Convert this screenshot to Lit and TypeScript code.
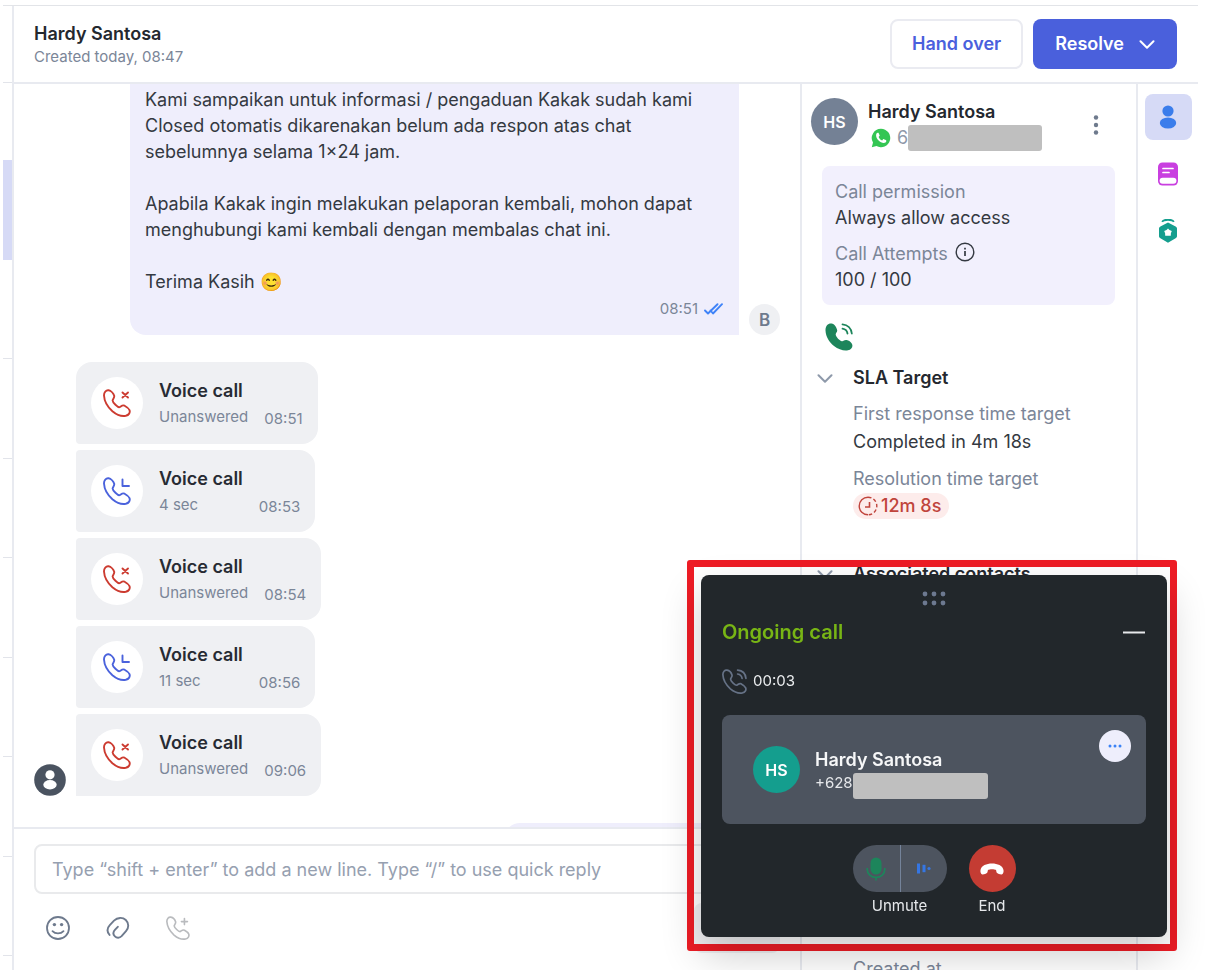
import { LitElement, html, css, svg } from "lit";
import { customElement, property } from "lit/decorators.js";
import { classMap } from "lit/directives/class-map.js";

const HANDSET =
  "M5.6 1.3C3 .9.9 3.4 1 6.5 1.3 12 4.4 17.8 9.4 22.2c4.400 3.700 9.500 5.300 13.400 4.600C25.900 26.100 27.400 23.600 26.500 21.100 25.700 19 23.500 17.800 21.400 16.600 19.400 15.600 18 17.500 16.500 18.200 15 18.600 9.500 13.500 9.600 11.500 9.800 10 11.700 8.600 11.200 6.800 10.500 4.500 8 1.700 5.600 1.300Z";

const handset = (extra: unknown) => html`
  <svg class="icon" viewBox="0 0 28 28" fill="none" stroke="currentColor" stroke-width="1.900"
    stroke-linejoin="round" stroke-linecap="round" aria-hidden="true">
    <path d=${HANDSET}></path>${extra}
  </svg>`;

const chevron = html`
  <svg class="chevron" viewBox="0 0 16 9" fill="none" stroke="currentColor" stroke-width="2"
    stroke-linecap="round" stroke-linejoin="round" aria-hidden="true"><path d="M1.500 1.200 8 7.700l6.500-6.500"></path></svg>`;

const base = css`
  * { box-sizing: border-box; }
  button { font: inherit; border: 0; margin: 0; padding: 0; background: none; color: inherit; cursor: pointer; }
  p, h1, h2, h3, dl, dd, ul { margin: 0; padding: 0; }
  svg { display: block; flex: none; }
`;

@customElement("voice-call-card")
export class VoiceCallCard extends LitElement {
  @property() detail = "";
  @property() time = "";
  @property({ type: Boolean }) missed = false;
  @property() place = "middle";

  static styles = [base, css`
    :host { display: block; width: fit-content; }
    .card { display: flex; align-items: center; gap: 16px; height: 82px; padding: 0 15px; background: #eff0f3; border-radius: 4px 16px 16px 4px; }
    .card.first { border-top-left-radius: 16px; }
    .card.last { border-bottom-left-radius: 0; }
    .disc { display: grid; place-items: center; width: 52px; height: 52px; border-radius: 50%; background: #fff; color: #4a62dc; flex: none; }
    .missed .disc { color: #cc3b30; }
    .icon { width: 28px; height: 28px; }
    .body { display: grid; grid-template-columns: auto auto; column-gap: 16px; padding-top: 1px; font-size: 15px; line-height: 26px; color: #7b8698; }
    .title { font-size: 18px; font-weight: 600; color: #272b33; }
    .time { grid-column: 2; padding-top: 4px; line-height: 22px; }
    .detail { grid-column: 1; }
  `];

  render() {
    const mark = this.missed
      ? svg`<path d="M19.500 3.500l5.500 5M25 3.500l-5.500 5"></path>`
      : svg`<path d="M19.500 2.500v6.500h6.500"></path>`;
    return html`
      <article class=${classMap({ card: true, missed: this.missed, [this.place]: true })}>
        <span class="disc">${handset(mark)}</span>
        <div class="body">
          <h3 class="title">Voice call</h3>
          <p class="detail">${this.detail}</p>
          <time class="time">${this.time}</time>
        </div>
      </article>`;
  }
}

@customElement("contact-panel")
export class ContactPanel extends LitElement {
  static styles = [base, css`
    :host { display: block; overflow: hidden; padding: 14px 10px 0 9px; font-size: 18px; line-height: 26px; color: #343941; }
    .who { display: flex; align-items: flex-start; gap: 10px; }
    .avatar { display: grid; place-items: center; width: 47px; height: 47px; border-radius: 50%; background: #748195; color: #fff; font-weight: 600; font-size: 16px; flex: none; }
    .names { flex: 1; min-width: 0; padding-top: 1px; }
    .name { font-size: 18px; font-weight: 600; color: #24282f; line-height: 26px; }
    .number { display: flex; align-items: center; color: #8f99a9; height: 26px; }
    .wa { width: 20px; height: 20px; margin: 0 6px 0 3px; }
    .hidden { width: 134px; height: 26px; border-radius: 3px; background: #bfbfbf; }
    .more { display: grid; place-items: center; align-self: center; width: 20px; height: 32px; margin-right: 20px; color: #6e7a8d; }
    .more svg { width: 6px; height: 20px; }
    .permission { margin: 15px 11px 0 11px; padding: 13px 13px 12px; border-radius: 8px; background: #f2f0fd; }
    .label { display: flex; align-items: center; gap: 7px; color: #7b8698; }
    .permission .label + dd + .label { margin-top: 10px; }
    .info { width: 20px; height: 20px; color: #343941; margin-top: -4px; }
    .ring { display: grid; place-items: center; width: 28px; height: 28px; margin: 18px 0 0 14px; color: #1d855b; }
    .ring svg { width: 28px; height: 28px; }
    .head { display: flex; align-items: center; gap: 20px; margin: 14px 0 0 6px; font-weight: 600; font-size: 18px; color: #24282f; }
    .chevron { width: 16px; height: 9px; color: #8e99aa; }
    .facts { margin-left: 42px; padding-top: 9px; line-height: 28px; }
    .facts .label + dd + .label { margin-top: 9px; }
    .late { display: inline-flex; align-items: center; gap: 3px; height: 26px; padding: 0 8px 0 5px; border-radius: 13px; background: #fdeceb; color: #c0443c; font-weight: 500; }
    .late svg { width: 20px; height: 20px; }
    .sla { min-height: 182px; }
    .contacts { min-height: 395px; }
    .created { margin-left: 42px; color: #7b8698; }
  `];

  render() {
    return html`
      <div class="who">
        <span class="avatar">HS</span>
        <div class="names">
          <h2 class="name">Hardy Santosa</h2>
          <div class="number">
            <svg class="wa" viewBox="0 0 20 20" aria-label="WhatsApp">
              <path fill="#34c653" d="M10 .8a9.200 9.200 0 0 0-8 13.800L.8 19.200l4.700-1.200A9.200 9.200 0 1 0 10 .8Z"></path>
              <path fill="#fff" d="M6.700 4.800c-.900.2-1.700 1.200-1.600 2.600.2 3.700 4 7.400 7.700 7.600 1.300 0 2.300-.8 2.500-1.700.1-.6 0-.9-.5-1.200l-1.900-.9c-.4-.2-.7-.1-1 .3l-.7.900c-1.500-.5-3-2-3.600-3.500l.8-.8c.3-.3.3-.6.2-.9l-.9-2c-.2-.4-.5-.5-1-.4Z"></path>
            </svg>
            6<span class="hidden"></span>
          </div>
        </div>
        <button class="more" aria-label="More options">
          <svg viewBox="0 0 6 20" fill="currentColor"><circle cx="3" cy="2.500" r="2.200"></circle><circle cx="3" cy="10" r="2.200"></circle><circle cx="3" cy="17.500" r="2.200"></circle></svg>
        </button>
      </div>
      <dl class="permission">
        <dt class="label">Call permission</dt>
        <dd>Always allow access</dd>
        <dt class="label">Call Attempts
          <svg class="info" viewBox="0 0 20 20" fill="none" stroke="currentColor"><circle cx="10" cy="10" r="8.800" stroke-width="1.400"></circle><path d="M10 9v5" stroke-width="1.700"></path><path d="M10 5.800v1.800" stroke-width="1.700"></path></svg>
        </dt>
        <dd>100 / 100</dd>
      </dl>
      <button class="ring" aria-label="Call contact">
        <svg viewBox="0 0 28 28" fill="none">
          <path fill="currentColor" d="M6.600.6C3 .2.400 3 .500 7.500.800 13.500 4 19 9 23c4.500 3.600 10 5 14 4.200 3.800-.8 5.300-4 3.900-6.500-.9-1.700-3.200-3.200-5.400-3.600-2.200-.3-2.900 1.300-4.600 1.100-2.200-.4-6-4.400-6.200-6.500-.1-1.600 1.700-2.300 1.500-4.400C11.800 4.800 9.400.9 6.600.6Z"></path>
          <g stroke="currentColor" stroke-width="1.800" stroke-linecap="round"><path d="M17.500 1.300c5.200.4 8.800 4 9.300 9.200"></path><path d="M17.500 5.600c2.800.5 4.600 2.200 5 4.900"></path></g>
        </svg>
      </button>
      <section class="sla">
        <h3 class="head">${chevron}SLA Target</h3>
        <dl class="facts">
          <dt class="label">First response time target</dt>
          <dd>Completed in 4m 18s</dd>
          <dt class="label">Resolution time target</dt>
          <dd><span class="late">
            <svg viewBox="0 0 20 20" fill="none" stroke="currentColor" stroke-width="1.400"><path d="M10 1.200a8.800 8.800 0 0 0 0 17.600"></path><path d="M10 1.200a8.800 8.800 0 0 1 0 17.600" stroke-dasharray="3.500 2.300"></path><path d="M11.500 6v5H7" stroke-width="1.600"></path></svg>12m 8s</span></dd>
        </dl>
      </section>
      <section class="contacts"><h3 class="head">${chevron}Associated contacts</h3></section>
      <p class="created">Created at</p>`;
  }
}

@customElement("call-widget")
export class CallWidget extends LitElement {
  static styles = [base, css`
    :host { display: block; padding: 8px 3px 7px 7px; border: 7px solid #ee1c25; border-radius: 3px; }
    .panel { width: 466px; padding: 16px 21px 19px; border-radius: 8px; background: #22272b; color: #e6e8eb; box-shadow: 0 18px 40px rgba(0, 0, 0, 0.2); font-size: 15px; line-height: 24px; }
    .grip { width: 24px; height: 15px; margin: 0 auto; color: #6d7990; }
    .top { display: flex; align-items: center; justify-content: space-between; margin-top: 11px; }
    .title { font-size: 20px; line-height: 30px; font-weight: 600; color: #78b515; }
    .min { display: grid; place-items: center; width: 24px; height: 24px; }
    .min svg { width: 24px; height: 3px; color: #e6e8eb; }
    .timer { display: flex; align-items: center; gap: 6px; height: 26px; margin-top: 21px; color: #eceef0; }
    .timer .icon { width: 25px; height: 25px; color: #667286; }
    .peer { display: flex; align-items: center; gap: 15px; height: 109px; margin-top: 21px; padding: 0 15px 0 31px; border-radius: 8px; background: #4d545f; }
    .avatar { display: grid; place-items: center; width: 47px; height: 47px; border-radius: 50%; background: #149e8e; color: #fff; font-size: 16px; font-weight: 600; flex: none; }
    .names { flex: 1; }
    .name { font-size: 18px; font-weight: 600; color: #f6f7f8; line-height: 26px; }
    .number { display: flex; height: 20px; line-height: 20px; }
    .hidden { width: 135px; height: 26px; border-radius: 3px; background: #bfbfbf; }
    .dots { display: grid; place-items: center; align-self: flex-start; width: 32px; height: 32px; margin-top: 15px; border-radius: 50%; background: #eeeefc; color: #3b82f6; }
    .dots svg { width: 14px; height: 4px; }
    .actions { display: flex; justify-content: center; gap: 22px; margin-top: 21px; text-align: center; }
    .pill { display: flex; height: 47px; border-radius: 24px; overflow: hidden; background: #4d545f; }
    .pill button { display: grid; place-items: center; width: 47px; }
    .pill button + button { border-left: 1px solid #74839a; }
    .mic { width: 20px; height: 24px; color: #1d855b; }
    .wave { width: 14px; height: 11px; color: #3576e3; }
    .end { display: grid; place-items: center; width: 47px; height: 47px; border-radius: 50%; background: #c43c33; color: #fff; }
    .end svg { width: 24px; height: 12px; }
    .caption { margin-top: 2px; }
  `];

  render() {
    return html`
      <section class="panel" aria-label="Ongoing call">
        <svg class="grip" viewBox="0 0 24 15" fill="currentColor" aria-hidden="true">
          ${[3, 12, 21].map((x) => [3, 12].map((y) => svg`<circle cx=${x} cy=${y} r="2.400"></circle>`))}
        </svg>
        <div class="top">
          <h2 class="title">Ongoing call</h2>
          <button class="min" aria-label="Minimise"><svg viewBox="0 0 24 3"><path d="M1 1.500h22" stroke="currentColor" stroke-width="2"></path></svg></button>
        </div>
        <div class="timer">
          ${handset(svg`<path d="M17.500 1.300c5.200.4 8.800 4 9.300 9.200"></path><path d="M17.500 5.600c2.800.5 4.600 2.200 5 4.900"></path>`)}
          <time>00:03</time>
        </div>
        <div class="peer">
          <span class="avatar">HS</span>
          <div class="names">
            <h3 class="name">Hardy Santosa</h3>
            <div class="number">+628<span class="hidden"></span></div>
          </div>
          <button class="dots" aria-label="Call options"><svg viewBox="0 0 14 4" fill="currentColor"><circle cx="2" cy="2" r="1.500"></circle><circle cx="7" cy="2" r="1.500"></circle><circle cx="12" cy="2" r="1.500"></circle></svg></button>
        </div>
        <div class="actions">
          <div>
            <div class="pill">
              <button aria-label="Microphone">
                <svg class="mic" viewBox="0 0 20 24" fill="none" stroke="currentColor"><rect x="4.500" y=".5" width="11" height="17" rx="5.500" fill="currentColor" stroke="none"></rect><path d="M1.200 11v1c0 5 3.800 8.300 8.800 8.300s8.800-3.300 8.800-8.300v-1M10 20v3.500" stroke-width="1.700"></path></svg>
              </button>
              <button aria-label="Audio settings">
                <svg class="wave" viewBox="0 0 14 11" fill="currentColor"><rect x="0" y=".5" width="3" height="10"></rect><rect x="5.500" y="1.800" width="3" height="7.400"></rect><circle cx="12" cy="5.500" r="1.600"></circle></svg>
              </button>
            </div>
            <p class="caption">Unmute</p>
          </div>
          <div>
            <button class="end" aria-label="End call">
              <svg viewBox="0 0 24 12" fill="currentColor"><path d="M12 .6C6.500.6 1.300 2.700.5 7c-.3 2 .2 4.200 2 4.400 1.500.1 3.400-.5 4.400-1.300 1.200-1 .4-2.600 1.300-3.300 1.200-.9 6.400-.9 7.600 0 .9.7.1 2.300 1.300 3.300 1 .8 2.900 1.400 4.400 1.300 1.800-.2 2.300-2.400 2-4.400C22.700 2.700 17.500.6 12 .6Z"></path></svg>
            </button>
            <p class="caption">End</p>
          </div>
        </div>
      </section>`;
  }
}

const CALLS = [
  { missed: true, detail: "Unanswered", time: "08:51", place: "first" },
  { missed: false, detail: "4 sec", time: "08:53", place: "middle" },
  { missed: true, detail: "Unanswered", time: "08:54", place: "middle" },
  { missed: false, detail: "11 sec", time: "08:56", place: "middle" },
  { missed: true, detail: "Unanswered", time: "09:06", place: "last" },
];

@customElement("app-root")
export class AppRoot extends LitElement {
  static styles = [base, css`
    :host { display: block; box-sizing: border-box; height: 100vh; overflow: hidden; padding: 5px 7px 0 3px; background: #fff; font-family: Inter, "Liberation Sans", sans-serif; font-optical-sizing: none; font-size: 18px; line-height: 26px; color: #343941; }
    .app { display: grid; grid-template-columns: 9px minmax(0, 1fr); grid-template-rows: minmax(0, 1fr); height: 100%; border-top: 1px solid #e2e4e8; }
    .list { overflow: hidden; }
    .row { height: 100px; border-bottom: 1px solid #e2e4ea; }
    .row:nth-child(even) { height: 99px; }
    .row.top { height: 77px; }
    .row.cut { height: 77px; border-bottom: 0; }
    .row.on { height: 100px; background: #d6daf6; border-bottom: 0; }
    .main { display: grid; grid-template-rows: auto minmax(0, 1fr); border-left: 2px solid #e8eaf0; min-width: 0; min-height: 0; }
    .bar { display: flex; align-items: center; gap: 10px; height: 78px; padding: 0 21px 0 20px; border-bottom: 2px solid #e8eaf0; }
    .title { flex: 1; padding-top: 1px; }
    .title h1 { font-size: 18px; line-height: 24px; font-weight: 600; color: #24282f; }
    .title p { font-size: 15px; line-height: 22px; color: #7b8698; }
    .btn { display: flex; align-items: center; gap: 15px; height: 50px; padding: 0 22px; border-radius: 8px; font-size: 18px; font-weight: 600; }
    .ghost { border: 2px solid #eaebf1; padding: 0 20px; color: #4a60dd; }
    .solid { background: #4a60dc; color: #fff; }
    .chevron { width: 16px; height: 9px; }
    .cols { display: grid; grid-template-columns: minmax(0, 1fr) 336px 62px; grid-template-rows: minmax(0, 1fr); min-height: 0; }
    .chat { display: grid; grid-template-rows: minmax(0, 1fr) auto; min-height: 0; }
    .log { display: flex; flex-direction: column; gap: 27px; overflow: hidden; padding: 0 20px; }
    .out { display: flex; align-items: flex-end; gap: 10px; margin-left: 96px; }
    .bubble { flex: 1; padding: 3px 16px 14px 15px; background: #efeefc; border-bottom-left-radius: 16px; }
    .bubble p + p { margin-top: 26px; }
    .meta { display: flex; justify-content: flex-end; align-items: center; gap: 6px; font-size: 15px; line-height: 24px; margin-top: 2px; color: #7b8698; }
    .ticks { width: 19px; height: 12px; color: #3f83f8; }
    .badge { display: grid; place-items: center; width: 31px; height: 31px; border-radius: 50%; background: #eff0f3; color: #6e7a8d; font-size: 17px; font-weight: 600; flex: none; }
    .in { display: flex; align-items: flex-end; gap: 10px; }
    .person { width: 32px; height: 32px; }
    .calls { display: grid; gap: 6px; list-style: none; }
    .next { align-self: flex-end; width: 276px; height: 40px; flex: none; background: #efeefc; border-top-left-radius: 16px; }
    .composer { border-top: 2px solid #e8eaf0; padding: 15px 20px 17px; }
    .field { display: block; width: 100%; height: 50px; padding: 0 16px; border: 2px solid #e9eaec; border-radius: 8px; outline: 0; background: #fff; font: inherit; color: inherit; }
    .field::placeholder { color: #96a0b0; opacity: 1; }
    .tools { display: flex; align-items: center; gap: 32px; height: 50px; margin-top: 9px; padding-left: 10px; color: #6e7a8d; }
    .tools button { display: grid; place-items: center; width: 28px; height: 28px; }
    .tools svg { width: 26px; height: 26px; }
    .tools .call { color: #b9bbbe; }
    .tools .call svg { width: 24px; height: 24px; }
    .tools .send { width: 86px; height: 50px; margin-left: auto; border-radius: 8px; background: #f0f0f2; }
    .details { border-left: 2px solid #e8eaf0; }
    .rail { display: flex; flex-direction: column; align-items: center; gap: 11px; padding-top: 10px; border-left: 2px solid #e8eaf0; }
    .rail button { display: grid; place-items: center; width: 47px; height: 46px; border-radius: 8px; }
    .rail .on { background: #d6daf6; }
    .rail svg { width: 24px; height: 24px; }
    .call-box { position: fixed; right: 28px; bottom: 19px; }
  `];

  render() {
    return html`
      <div class="app">
        <aside class="list">
          <div class="row top"></div><div class="row cut"></div><div class="row on"></div>
          ${[0, 1, 2, 3, 4, 5, 6, 7].map(() => html`<div class="row"></div>`)}
        </aside>
        <main class="main">
          <header class="bar">
            <div class="title"><h1>Hardy Santosa</h1><p>Created today, 08:47</p></div>
            <button class="btn ghost">Hand over</button>
            <button class="btn solid">Resolve ${chevron}</button>
          </header>
          <div class="cols">
            <section class="chat">
              <div class="log">
                <div class="out">
                  <div class="bubble">
                    <p>Kami sampaikan untuk informasi / pengaduan Kakak sudah kami Closed otomatis dikarenakan belum ada respon atas chat sebelumnya selama 1×24 jam.</p>
                    <p>Apabila Kakak ingin melakukan pelaporan kembali, mohon dapat menghubungi kami kembali dengan membalas chat ini.</p>
                    <p>Terima Kasih 😊</p>
                    <div class="meta"><time>08:51</time>
                      <svg class="ticks" viewBox="0 0 19 12" fill="none" stroke="currentColor" stroke-width="1.900" stroke-linecap="round" stroke-linejoin="round"><path d="M1 7.500 4 10.500 13.500 1.200M6.500 7.500 9 10.500 18 1.200"></path></svg>
                    </div>
                  </div>
                  <span class="badge">B</span>
                </div>
                <div class="in">
                  <svg class="person" viewBox="0 0 32 32" aria-hidden="true"><circle cx="16" cy="16" r="15.800" fill="#4a5360"></circle><circle cx="16" cy="10.800" r="4.600" fill="#fff"></circle><ellipse cx="16" cy="20.800" rx="6.700" ry="4.700" fill="#fff"></ellipse></svg>
                  <ul class="calls">
                    ${CALLS.map((c) => html`<li><voice-call-card .missed=${c.missed} .detail=${c.detail} .time=${c.time} .place=${c.place}></voice-call-card></li>`)}
                  </ul>
                </div>
                <div class="next"></div>
              </div>
              <footer class="composer">
                <input class="field" type="text" aria-label="Message" placeholder="Type “shift + enter” to add a new line. Type “/” to use quick reply" />
                <div class="tools">
                  <button aria-label="Emoji">
                    <svg viewBox="0 0 26 26" fill="none" stroke="currentColor" stroke-width="1.800" stroke-linecap="round"><circle cx="13" cy="13" r="11"></circle><path d="M7.500 16.200c2.800 3 8.200 3 11 0"></path><g fill="currentColor" stroke="none"><circle cx="9.400" cy="9.600" r="1.700"></circle><circle cx="16.600" cy="9.600" r="1.700"></circle></g></svg>
                  </button>
                  <button aria-label="Attach file">
                    <svg viewBox="0 0 26 26" fill="none" stroke="currentColor" stroke-width="1.900" stroke-linecap="round"><path d="M4.600 20C1.600 16.500 1.900 13.300 4.800 10.200L9 5.600c3.500-3.300 8.600-3.600 11.800-.6 3.400 3.300 3 8 .2 11.200l-4.400 5c-1.900 1.900-4.900 2-6.700.2-1.900-1.900-1.800-4.500 0-6.500l2.900-3.100"></path></svg>
                  </button>
                  <button class="call" aria-label="Start call" disabled>${handset(svg`<path d="M21.500 3v7M18 6.500h7"></path>`)}</button>
                  <button class="send" aria-label="Send" disabled></button>
                </div>
              </footer>
            </section>
            <contact-panel class="details"></contact-panel>
            <nav class="rail" aria-label="Side panels">
              <button class="on" aria-label="Contact"><svg viewBox="0 0 24 24" fill="#3b7deb"><circle cx="12" cy="6" r="5.600"></circle><ellipse cx="12" cy="18" rx="8.200" ry="5.500"></ellipse></svg></button>
              <button aria-label="Notes"><svg viewBox="0 0 24 24"><rect x="2" y=".5" width="20" height="23" rx="4.500" fill="#c93fe0"></rect><path d="M7 6.500h10M7 10.500h6" stroke="#fff" stroke-width="1.700" stroke-linecap="round"></path><rect x="3.600" y="15.800" width="16.800" height="6" rx="3" fill="#fff"></rect></svg></button>
              <button aria-label="Badges"><svg viewBox="0 0 24 24"><path d="M6.200 2.800C7 1 9 .7 12 .7s5 .3 5.800 2.100" fill="none" stroke="#149e8e" stroke-width="1.900"></path><path d="M12 3.400l7.600 4c1 .5 1.400 1.200 1.400 2.200v7.400c0 1-.4 1.700-1.400 2.200L12 23.800l-7.600-4.600C3.400 18.700 3 18 3 17V9.600c0-1 .4-1.700 1.400-2.200Z" fill="#149e8e"></path><path d="M12 9.600l1.500 1.500 2.300.9-.9 2.200-.1 2.600H9.200l-.1-2.600-.9-2.200 2.300-.9Z" fill="#fff"></path></svg></button>
            </nav>
          </div>
        </main>
      </div>
      <call-widget class="call-box"></call-widget>`;
  }
}
